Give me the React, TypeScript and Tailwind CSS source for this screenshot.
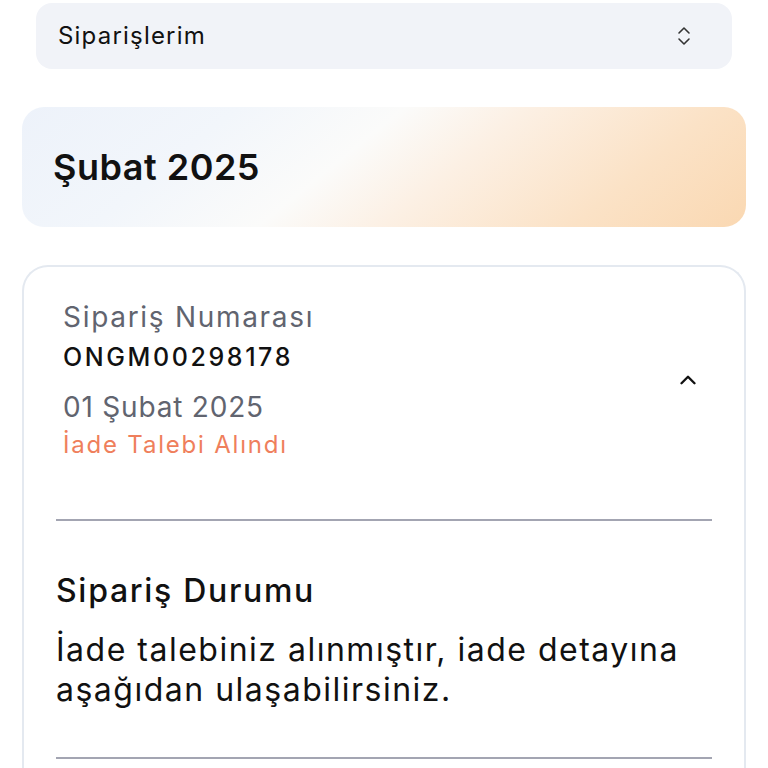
import { ChevronsUpDown, ChevronUp } from "lucide-react";

export default function App() {
  return (
    <div
      className="relative h-[768px] w-[768px] overflow-hidden bg-white"
      style={{ fontFamily: 'Inter, "Noto Sans", sans-serif' }}
    >
      <div className="px-[36px] pt-[3px]">
        <div className="flex h-[66px] items-center justify-between rounded-[16px] bg-[#f1f3f8] pl-[22px] pr-[36px]">
          <span className="text-[24px] tracking-[1.2px] text-[#111]">Siparişlerim</span>
          <ChevronsUpDown className="h-[24px] w-[24px] text-[#333]" strokeWidth={1.6} />
        </div>
      </div>

      <div className="mt-[38px] px-[22px]">
        <div className="flex h-[120px] items-center rounded-[22px] bg-[linear-gradient(141deg,#edf2fa_0%,#f2f6fb_25%,#fbfbfa_44%,#fcf0e4_58%,#fbe2c6_80%,#fad8b2_100%)] pl-[31px]">
          <h1 className="text-[36px] font-semibold tracking-[0.5px] text-[#111]">Şubat 2025</h1>
        </div>
      </div>

      <div className="mt-[38px] px-[22px]">
        <div className="rounded-t-[26px] border-2 border-b-0 border-[#e4e9f0] px-[32px] pt-[30px] pb-[40px]">
          <div className="flex items-center justify-between pl-[7px] pr-[11px]">
            <div className="flex flex-col">
              <span className="text-[28px] leading-[40px] tracking-[1.7px] text-[#61646f]">Sipariş Numarası</span>
              <span className="text-[25px] font-medium leading-[40px] tracking-[2.6px] text-[#111]">ONGM00298178</span>
              <span className="mt-[10px] text-[28px] leading-[40px] tracking-[0.8px] text-[#61646f]">01 Şubat 2025</span>
              <span className="text-[24px] leading-[36px] tracking-[1.8px] text-[#ef7f5c]">İade Talebi Alındı</span>
            </div>
            <ChevronUp className="h-[26px] w-[26px] text-[#111]" strokeWidth={2.2} />
          </div>

          <div className="mt-[56px] h-[2px] bg-[#a3a5b2]" />

          <h2 className="mt-[50px] text-[32px] font-medium leading-[40px] tracking-[1.7px] text-[#111]">Sipariş Durumu</h2>
          <p className="mt-[19px] text-[32px] leading-[40px] tracking-[1.5px] text-[#111]">
            İade talebiniz alınmıştır, iade detayına aşağıdan ulaşabilirsiniz.
          </p>

          <div className="mt-[47px] h-[2px] bg-[#a3a5b2]" />
        </div>
      </div>
    </div>
  );
}
